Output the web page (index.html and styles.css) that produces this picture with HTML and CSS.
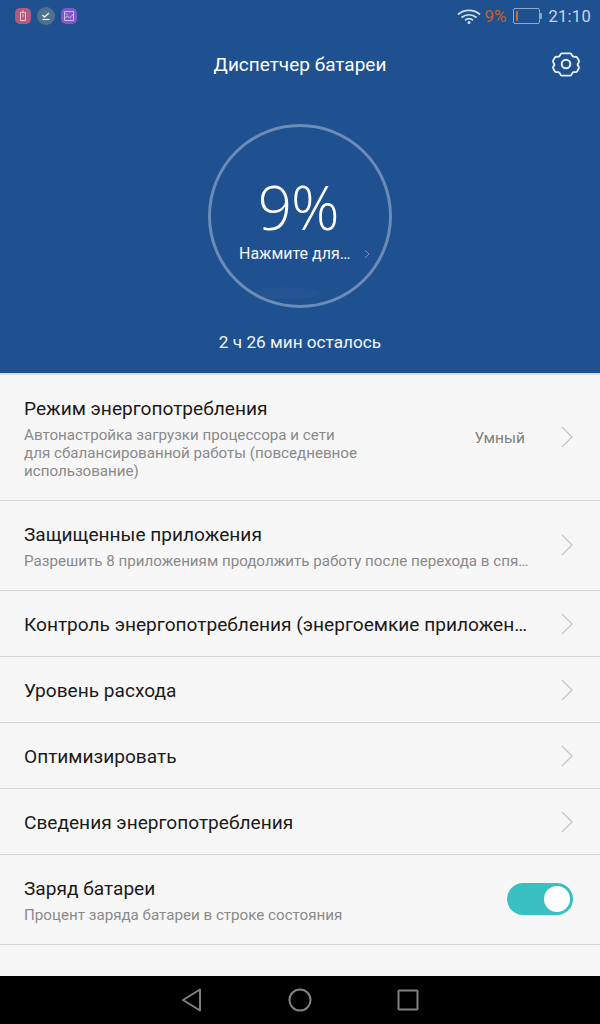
FILE: index.html
```html
<!DOCTYPE html>
<html lang="ru">
<head>
<meta charset="utf-8">
<title>Диспетчер батареи</title>
<link rel="stylesheet" href="styles.css">
</head>
<body>
<div class="screen">
  <header class="hero">
    <div class="status">
      <div class="notifs">
        <span class="notif pink"><svg viewBox="0 0 16 16" width="16" height="16"><path d="M5.5 4.5h5v8h-5zM7 3h2" fill="none" stroke="#e8c0cc" stroke-width="1"/><path d="M8 6v3" stroke="#e8c0cc"/></svg></span>
        <span class="notif slate"><svg viewBox="0 0 18 18" width="18" height="18"><path d="M5.5 8l2 2 4.500-4" fill="none" stroke="#e6edf2" stroke-width="1.400"/><path d="M5.500 12.500h7" stroke="#e6edf2" stroke-width="1.200"/></svg></span>
        <span class="notif violet"><svg viewBox="0 0 16 16" width="16" height="16"><path d="M3.500 3.500h9v9h-9zM3.500 10l3-2 2 2 4-4M4.500 5.500l2 1" fill="none" stroke="#cbb9ee" stroke-width="1"/></svg></span>
      </div>
      <div class="sys">
        <svg class="wifi" viewBox="0 0 24 16" width="24" height="16"><g fill="none" stroke="#d5dfeb" stroke-width="1.700"><path d="M1 6.500C7 1 17 1 23 6.500"/><path d="M4.500 9.500C9 5.800 15 5.800 19.500 9.500"/><path d="M8 12.300c2.500-2 5.500-2 8 0"/></g><circle cx="12" cy="14.500" r="1.500" fill="#d5dfeb"/></svg>
        <span class="pct">9%</span>
        <span class="batt"><span class="batt-level"></span></span>
        <span class="clock">21:10</span>
      </div>
    </div>
    <div class="titlebar">
      <h1 class="title">Диспетчер батареи</h1>
      <svg class="gear" viewBox="0 0 30 30" width="30" height="30"><path d="M10.300 3.500h9.400c.9 0 1.200.9 1.500 1.700.5 1.500 1.700 2.300 3.300 2.100.9-.1 1.900-.3 2.400.6l2 3.600c.4.800 0 1.500-.6 2.200-1 1.100-1 2.500 0 3.600.6.700 1 1.400.6 2.200l-2 3.600c-.5.900-1.500.7-2.400.6-1.600-.2-2.800.6-3.300 2.100-.3.800-.6 1.700-1.500 1.700h-9.400c-.9 0-1.200-.9-1.500-1.700-.5-1.500-1.700-2.300-3.300-2.100-.9.100-1.900.3-2.400-.6l-2-3.600c-.4-.8 0-1.500.6-2.200 1-1.100 1-2.500 0-3.600-.6-.7-1-1.400-.6-2.200l2-3.600c.5-.9 1.500-.7 2.400-.6 1.600.2 2.800-.6 3.300-2.100.3-.8.600-1.700 1.500-1.700z" transform="translate(15 15) scale(.93) translate(-15 -15)" fill="none" stroke="#e8eef6" stroke-width="2"/><circle cx="15" cy="15" r="4.300" fill="none" stroke="#e8eef6" stroke-width="2"/></svg>
    </div>
    <div class="dial">
      <div class="ring">
        <div class="big">9%</div>
        <div class="hint"><span>Нажмите для…</span><svg class="hint-arrow" viewBox="0 0 6 10" width="6" height="10"><path d="M1 1l4 4-4 4" fill="none" stroke="#6f8fb8" stroke-width="1"/></svg></div>
        <div class="glow"></div>
      </div>
    </div>
    <p class="left">2 ч 26 мин осталось</p>
  </header>

  <main class="list">
    <div class="row row-mode">
      <div class="text">
        <div class="name">Режим энергопотребления</div>
        <div class="sub">Автонастройка загрузки процессора и сети<br>для сбалансированной работы (повседневное<br>использование)</div>
      </div>
      <span class="value">Умный</span>
      <svg class="chev" viewBox="0 0 12 22" width="12" height="22"><path d="M1 1l10 10L1 21" fill="none" stroke="#c6c6c6" stroke-width="1.300"/></svg>
    </div>
    <div class="row row-two">
      <div class="text">
        <div class="name">Защищенные приложения</div>
        <div class="sub ell">Разрешить 8 приложениям продолжить работу после перехода в спящий режим</div>
      </div>
      <svg class="chev" viewBox="0 0 12 22" width="12" height="22"><path d="M1 1l10 10L1 21" fill="none" stroke="#c6c6c6" stroke-width="1.300"/></svg>
    </div>
    <div class="row row-one">
      <div class="text"><div class="name ell">Контроль энергопотребления (энергоемкие приложения)</div></div>
      <svg class="chev" viewBox="0 0 12 22" width="12" height="22"><path d="M1 1l10 10L1 21" fill="none" stroke="#c6c6c6" stroke-width="1.300"/></svg>
    </div>
    <div class="row row-one">
      <div class="text"><div class="name">Уровень расхода</div></div>
      <svg class="chev" viewBox="0 0 12 22" width="12" height="22"><path d="M1 1l10 10L1 21" fill="none" stroke="#c6c6c6" stroke-width="1.300"/></svg>
    </div>
    <div class="row row-one">
      <div class="text"><div class="name">Оптимизировать</div></div>
      <svg class="chev" viewBox="0 0 12 22" width="12" height="22"><path d="M1 1l10 10L1 21" fill="none" stroke="#c6c6c6" stroke-width="1.300"/></svg>
    </div>
    <div class="row row-one">
      <div class="text"><div class="name">Сведения энергопотребления</div></div>
      <svg class="chev" viewBox="0 0 12 22" width="12" height="22"><path d="M1 1l10 10L1 21" fill="none" stroke="#c6c6c6" stroke-width="1.300"/></svg>
    </div>
    <div class="row row-two">
      <div class="text">
        <div class="name">Заряд батареи</div>
        <div class="sub">Процент заряда батареи в строке состояния</div>
      </div>
      <span class="toggle"><span class="knob"></span></span>
    </div>
  </main>

  <nav class="navbar">
    <svg viewBox="0 0 24 24" width="24" height="24"><path d="M3 12L20 1.500v21z" fill="none" stroke="#808080" stroke-width="2" stroke-linejoin="round"/></svg>
    <svg viewBox="0 0 24 24" width="24" height="24"><circle cx="12" cy="12" r="10.500" fill="none" stroke="#808080" stroke-width="2"/></svg>
    <svg viewBox="0 0 24 24" width="24" height="24"><rect x="2.500" y="2.500" width="19" height="19" rx="1" fill="none" stroke="#808080" stroke-width="2"/></svg>
  </nav>
</div>
</body>
</html>
```
FILE: styles.css
```css
* { box-sizing: border-box; }
html, body { margin: 0; padding: 0; }
body { font-family: Roboto, "Liberation Sans", sans-serif; background: #f7f7f7; }
.screen { width: 600px; height: 1024px; display: flex; flex-direction: column; overflow: hidden; }

.hero { height: 375px; background: #1f5090; color: #fff; display: flex; flex-direction: column; border-bottom: 2px solid #dcdde0; }
.status { height: 32px; display: flex; justify-content: space-between; align-items: center; padding: 0 9px 0 15px; }
.notifs { display: flex; align-items: center; gap: 7px; }
.notif { width: 16px; height: 16px; border-radius: 5px; display: flex; align-items: center; justify-content: center; }
.pink { background: #b75a7f; }
.slate { background: #4f7189; border-radius: 50%; width: 18px; height: 18px; margin: 0 -1px; }
.violet { background: #8059c8; }
.sys { display: flex; align-items: center; }
.wifi { margin-right: 3px; }
.pct { color: #c95f27; font-size: 17px; width: 25px; }
.batt { position: relative; width: 27px; height: 16px; margin: 0 1px 0 4px; border: 1px solid #8eaacb; border-radius: 2px; display: block; padding: 2px; }
.batt::after { content: ""; position: absolute; right: -3px; top: 4px; width: 2px; height: 6px; background: #8eaacb; border-radius: 0 1px 1px 0; }
.batt-level { display: block; width: 2px; height: 10px; background: #c4702c; }
.clock { color: #ccd7e5; font-size: 16.500px; margin-left: 7px; letter-spacing: .3px; }

.titlebar { height: 65px; position: relative; display: flex; align-items: center; justify-content: center; }
.title { margin: 0 0 1px; font-size: 19px; font-weight: 400; color: #fff; }
.gear { position: absolute; right: 19px; top: 17px; }

.dial { margin-top: 27px; display: flex; justify-content: center; }
.ring { position: relative; width: 184px; height: 184px; border: 3px solid #6b8cb6; border-radius: 50%; display: flex; flex-direction: column; align-items: center; }
.big { margin: 45px 4px 0 0; font-size: 60px; line-height: 70px; font-weight: 300; font-family: "Open Sans", Roboto, sans-serif; letter-spacing: -1px; }
.hint { display: flex; align-items: center; font-size: 16px; line-height: 20px; margin-top: 2px; width: 100%; padding-left: 28px; color: #f2f5f9; }
.hint-arrow { margin-left: 14px; }
.glow { position: absolute; left: 42px; bottom: 6px; width: 66px; height: 12px; border-radius: 50%; background: rgba(255,255,255,.025); }
.left { margin: 24px 0 0; text-align: center; font-size: 17.200px; line-height: 20px; color: #f2f5f9; }

.list { flex: 1; }
.row { display: flex; align-items: center; padding: 0 27px 0 24px; border-bottom: 1px solid #d6d6d6; }
.row-mode { height: 126px; padding-top: 1px; }
.row-two { height: 90px; padding-top: 1px; }
.row-one { height: 66px; padding-top: 3px; }
.text { flex: 1; min-width: 0; }
.name { font-size: 19.100px; line-height: 24px; color: #1a1a1a; }
.sub { font-size: 15.150px; line-height: 18px; color: #8a8a8a; margin-top: 5px; }
.ell { white-space: nowrap; overflow: hidden; text-overflow: ellipsis; }
.value { font-size: 15.500px; color: #808080; margin-right: 36px; }
.chev { margin-left: 31px; flex: none; position: relative; top: -1px; }
.row-mode .chev { margin-left: 0; }
.toggle { width: 66px; height: 32px; border-radius: 16px; background: #38c0c3; padding: 3px; display: flex; justify-content: flex-end; flex: none; margin: -2px 0 0 24px; }
.knob { width: 26px; height: 26px; border-radius: 50%; background: #fff; }

.navbar { height: 48px; background: #000; display: flex; justify-content: center; align-items: center; gap: 84px; }
```
